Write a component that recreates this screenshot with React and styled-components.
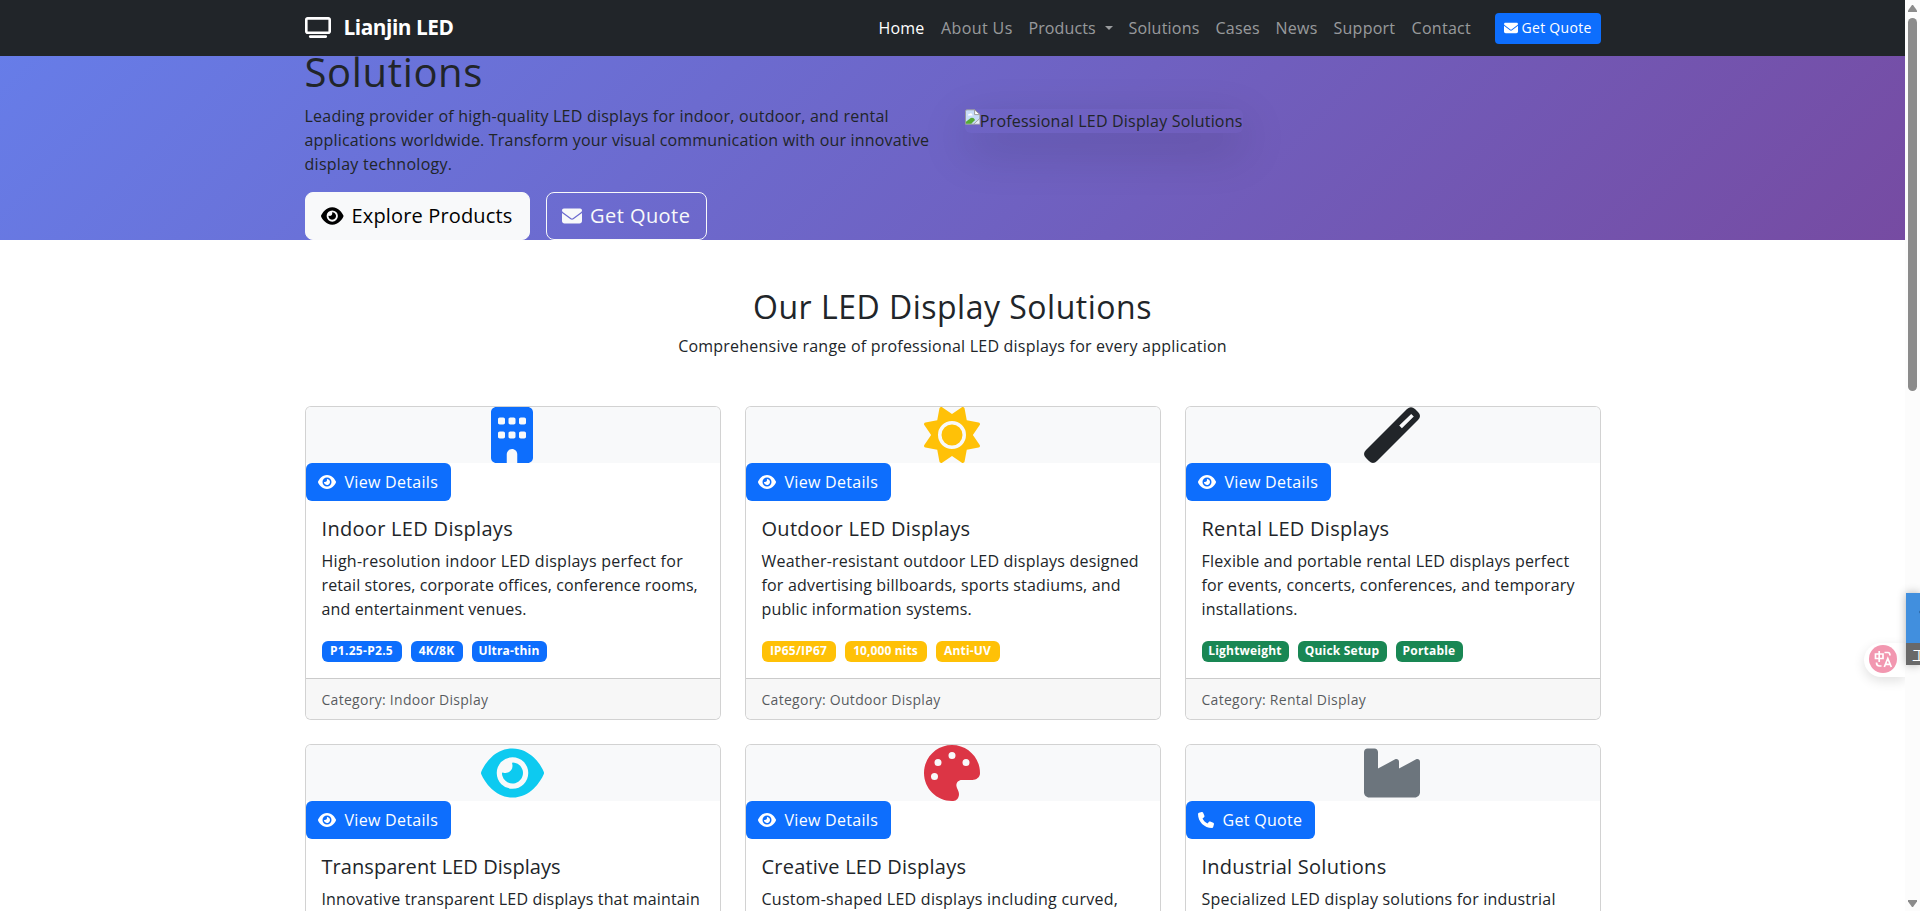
import React from "react";
import styled, { createGlobalStyle } from "styled-components";
import { FaTv, FaEye, FaEnvelope, FaBuilding, FaSun, FaPalette, FaPhone } from "react-icons/fa6";

const Global = createGlobalStyle`
  *, *::before, *::after { box-sizing: border-box; }
  html, body { margin: 0; overflow: hidden; }
  body {
    font-family: "Open Sans", "Noto Sans", sans-serif;
    font-size: 16px;
    line-height: 24px;
    color: #212529;
    background: #fff;
  }
  h1, h2, h5, p { margin: 0; font-weight: 400; }
`;

const Window = styled.div`
  display: flex;
  height: 911px;
  overflow: hidden;
`;

const Page = styled.div`
  position: relative;
  width: 1905px;
  height: 911px;
  overflow: hidden;
`;

const Container = styled.div`
  width: 1296px;
  margin: 0 auto;
`;

const Navbar = styled.nav`
  position: absolute;
  inset: 0 0 auto 0;
  z-index: 2;
  height: 56px;
  background: #212529;
`;

const NavRow = styled(Container)`
  display: flex;
  align-items: center;
  justify-content: space-between;
  height: 56px;
`;

const Brand = styled.div`
  display: flex;
  align-items: center;
  gap: 13px;
  padding-bottom: 2px;
  color: #fff;
  font-size: 20.8px;
  font-weight: 700;
  letter-spacing: -0.45px;
  svg { width: 26px; height: 21px; }
`;

const NavLinks = styled.div`
  display: flex;
  align-items: center;
  gap: 16px;
`;

const NavLink = styled.a`
  display: flex;
  align-items: center;
  white-space: nowrap;
  width: ${(p) => p.$w}px;
  padding-bottom: 1px;
  letter-spacing: ${(p) => p.$ls || 0}px;
  color: ${(p) => (p.$active ? "#fff" : "rgba(255,255,255,.55)")};
`;

const Caret = styled.span`
  margin-left: 9px;
  border-top: 4.8px solid;
  border-left: 4.8px solid transparent;
  border-right: 4.8px solid transparent;
`;

const QuoteButton = styled.a`
  display: flex;
  align-items: center;
  gap: 4px;
  width: 106px;
  height: 31px;
  margin-left: 7px;
  padding: 0 0 1px 9px;
  border-radius: 4px;
  background: #0d6efd;
  color: #fff;
  font-size: 14px;
  letter-spacing: 0.3px;
  white-space: nowrap;
  svg { width: 14px; height: 14px; }
`;

const Hero = styled.section`
  height: 240px;
  padding-top: 48px;
  background: linear-gradient(135deg, #667eea 0%, #764ba2 100%);
`;

const HeroRow = styled(Container)`
  display: flex;
`;

const HeroText = styled.div`
  width: 660px;
`;

const HeroTitle = styled.h1`
  height: 48px;
  margin-bottom: 8px;
  font-size: 40px;
  line-height: 47px;
  letter-spacing: 0.65px;
`;

const Line = styled.span`
  display: block;
  white-space: nowrap;
  letter-spacing: ${(p) => p.$ls || 0}px;
`;

const HeroButtons = styled.div`
  display: flex;
  gap: 16px;
  margin-top: 16px;
`;

const HeroButton = styled.a`
  display: flex;
  align-items: center;
  gap: 8px;
  width: ${(p) => p.$w}px;
  height: 48px;
  padding-left: 15.500px;
  padding-bottom: 1px;
  border: 1px solid #f8f9fa;
  border-radius: 8px;
  background: ${(p) => (p.$outline ? "transparent" : "#f8f9fa")};
  color: ${(p) => (p.$outline ? "#f8f9fa" : "#000")};
  font-size: 20px;
  letter-spacing: ${(p) => p.$ls}px;
  white-space: nowrap;
  svg { width: ${(p) => p.$icon}px; height: 20px; }
`;

const HeroImage = styled.div`
  display: flex;
  align-self: flex-start;
  width: 278px;
  height: 24px;
  margin-top: 61px;
  border-radius: 6px;
  box-shadow: 0 16px 48px rgba(0, 0, 0, 0.175);
  letter-spacing: 0.19px;
  white-space: nowrap;
`;

const Section = styled.section`
  padding-top: 48px;
`;

const SectionTitle = styled.h2`
  height: 38px;
  margin-bottom: 8px;
  font-size: 32px;
  line-height: 37px;
  letter-spacing: 0.5px;
  text-align: center;
`;

const SectionLead = styled.p`
  margin-bottom: 48px;
  letter-spacing: 0.22px;
  text-align: center;
`;

const CardGrid = styled(Container)`
  display: grid;
  grid-template-columns: repeat(3, 416px);
  gap: 24px;
`;

const Card = styled.article`
  display: flex;
  flex-direction: column;
  height: 314px;
  border: 1px solid rgba(0, 0, 0, 0.175);
  border-radius: 6px;
  background: #fff;
  overflow: hidden;
`;

const CardTop = styled.div`
  display: flex;
  align-items: center;
  justify-content: center;
  height: 56px;
  padding-right: 1px;
  background: #f8f9fa;
  color: ${(p) => p.$color};
  svg { flex: none; width: ${(p) => p.$icon || 56}px; height: 56px; }
`;

const CardButton = styled.a`
  display: flex;
  align-items: center;
  gap: 8.500px;
  width: ${(p) => p.$w}px;
  height: 38px;
  padding: 0 0 1px 12.500px;
  border-radius: 6px;
  background: #0d6efd;
  color: #fff;
  letter-spacing: 0.3px;
  white-space: nowrap;
  svg { width: ${(p) => p.$icon}px; height: 16px; }
`;

const CardBody = styled.div`
  flex: 1;
  padding: 16px;
`;

const CardTitle = styled.h5`
  height: 24px;
  margin-bottom: 8px;
  font-size: 20px;
  line-height: 23px;
  letter-spacing: ${(p) => p.$ls}px;
  white-space: nowrap;
`;

const Badges = styled.div`
  display: flex;
  gap: 9px;
  margin-top: 20px;
`;

const Badge = styled.span`
  width: ${(p) => p.$w}px;
  height: 21px;
  border-radius: 6px;
  background: ${(p) => p.$color};
  color: #fff;
  font-size: 12px;
  font-weight: 700;
  line-height: 19px;
  letter-spacing: ${(p) => p.$ls || 0}px;
  text-align: center;
  white-space: nowrap;
`;

const CardFooter = styled.div`
  height: 41px;
  padding: 9px 16px 7px;
  border-top: 1px solid rgba(0, 0, 0, 0.175);
  background: #f7f7f7;
  color: rgba(33, 37, 41, 0.75);
  font-size: 14px;
  letter-spacing: 0.28px;
`;

const Scrollbar = styled.div`
  display: flex;
  flex-direction: column;
  align-items: center;
  justify-content: space-between;
  width: 15px;
  height: 911px;
  padding: 5px 0 4px;
  background: #fcfcfc;
`;

const Thumb = styled.div`
  width: 9px;
  height: 373px;
  margin: 6px 0 auto;
  border-radius: 5px;
  background: #8b8b8b;
`;

const TranslateTab = styled.div`
  position: absolute;
  top: 643px;
  right: 0;
  width: 41px;
  height: 34px;
  padding: 2px 0 0 5px;
  border-radius: 17px 0 0 17px;
  background: #fff;
  box-shadow: 0 4px 12px rgba(0, 0, 0, 0.12);
`;

const SideWidget = styled.div`
  position: absolute;
  z-index: 3;
  top: 593px;
  left: 1906px;
  width: 14px;
  height: 72px;
  background: radial-gradient(circle at 16px 19px, #1f4a78 2px, #418fde 3px);
  box-shadow: 0 0 10px rgba(0, 0, 0, 0.3);
`;

const SideLabel = styled.div`
  width: 14px;
  height: 22px;
  margin-top: 50px;
  padding-left: 6px;
  overflow: hidden;
  background: #696969;
  color: #fff;
  font: 14px/22px "Noto Sans CJK SC", sans-serif;
`;

const BrokenImage = () => (
  <svg width="16" height="16" viewBox="0 0 16 16">
    <path d="M.5 2Q.5.5 2 .5H10L15.500 5.500V10L9 15.500H.5Z" fill="#c8dcf8" stroke="#9a9a9a" />
    <path d="M10 .5V5.500H15.500Z" fill="#fff" stroke="#9a9a9a" />
    <path d="M3 6.500Q3 4.500 5 4.500Q7 3 8 6.500Z" fill="#fff" />
    <path d="M1 15V13L6 9Q9 8 10.500 11L6.500 15Z" fill="#56aa35" />
    <path d="M9 15.500L15.500 9.500V15.500Z" fill="#e8eef8" stroke="#9a9a9a" strokeWidth=".7" />
  </svg>
);

const Wand = () => (
  <svg viewBox="0 0 56 56" fill="currentColor">
    <path
      fillRule="evenodd"
      d="M43 2.100Q47 -1.800 51 2.100L54 5.100Q58 9.100 54 13.100L13 54Q9 58 5 54L2 51Q-2 47 2 43ZM47.200 6.900L35.200 18.600L37.900 21.200L49.800 9.500Z"
    />
  </svg>
);

const Factory = () => (
  <svg viewBox="0 0 512 512" fill="currentColor">
    <path d="M32 32C14.300 32 0 46.300 0 64V432c0 26.500 21.500 48 48 48H464c26.500 0 48-21.500 48-48V152.200c0-18.200-19.400-29.700-35.400-21.100L320 215.400V152.200c0-18.200-19.400-29.700-35.400-21.100L128 215.400V64c0-17.700-14.300-32-32-32H32z" />
  </svg>
);

const TranslateIcon = () => (
  <svg width="29" height="29" viewBox="0 0 29 29" fill="none" stroke="#fff" strokeWidth="1.7">
    <circle cx="14" cy="14" r="14" fill="#f297b0" stroke="none" />
    <path d="M6.500 9H14V13.500H6.500ZM10.200 6V17M15.500 7.500H19Q21 7.500 21 10.500M7.500 17.500Q7.500 21 10.500 21H12.500M15.300 22L18.800 13.500L22.300 22M16.500 19.300H21.200" />
  </svg>
);

const Arrow = ({ down }) => (
  <svg width="9" height="7" viewBox="0 0 9 7">
    <path d={down ? "M0 0H9V1.500L5 7H4L0 1.500Z" : "M0 7H9V5.500L5 0H4L0 5.500Z"} fill="#8b8b8b" />
  </svg>
);

const links = [
  { t: "Home", w: 46.5, ls: 0.2, active: true },
  { t: "About Us", w: 71.5, ls: 0.4 },
  { t: "Products", w: 84, ls: 0.1, caret: true },
  { t: "Solutions", w: 71, ls: 0.22 },
  { t: "Cases", w: 44, ls: 0.25 },
  { t: "News", w: 42, ls: 0.25 },
  { t: "Support", w: 62, ls: 0.25 },
  { t: "Contact", w: 60, ls: 0.3 },
];

const cards = [
  {
    icon: <FaBuilding />, iconWidth: 42, color: "#0d6efd", title: "Indoor LED Displays", ls: 0.3,
    lines: [["High-resolution indoor LED displays perfect for", 0.27], ["retail stores, corporate offices, conference rooms,", 0.1], ["and entertainment venues.", 0.12]],
    badge: "#0d6efd", badges: [["P1.25-P2.5", 80, 0.3], ["4K/8K", 52, 0.2], ["Ultra-thin", 75, 0.2]], category: "Indoor Display",
  },
  {
    icon: <FaSun />, color: "#ffc107", title: "Outdoor LED Displays", ls: 0.3,
    lines: [["Weather-resistant outdoor LED displays designed", 0.21], ["for advertising billboards, sports stadiums, and", 0.18], ["public information systems.", 0.15]],
    badge: "#ffc107", badges: [["IP65/IP67", 74, 0.2], ["10,000 nits", 82, 0.1], ["Anti-UV", 64, 0.2]], category: "Outdoor Display",
  },
  {
    icon: <Wand />, color: "#212529", title: "Rental LED Displays", ls: 0.27,
    lines: [["Flexible and portable rental LED displays perfect", 0.18], ["for events, concerts, conferences, and temporary", 0.15], ["installations.", 0.15]],
    badge: "#198754", badges: [["Lightweight", 87, 0.2], ["Quick Setup", 89, 0.2], ["Portable", 67, 0.2]], category: "Rental Display",
  },
  { icon: <FaEye />, iconWidth: 63, color: "#0dcaf0", title: "Transparent LED Displays", ls: 0.06, lines: [["Innovative transparent LED displays that maintain", 0.15]] },
  { icon: <FaPalette />, color: "#dc3545", title: "Creative LED Displays", ls: 0.22, lines: [["Custom-shaped LED displays including curved,", 0.25]] },
  { icon: <Factory />, color: "#6c757d", title: "Industrial Solutions", ls: 0.25, lines: [["Specialized LED display solutions for industrial", 0.21]], quote: true },
];

export default function App() {
  return (
    <>
      <Global />
      <Window>
        <Page>
          <Navbar>
            <NavRow>
              <Brand><FaTv />Lianjin LED</Brand>
              <NavLinks>
                {links.map((l) => (
                  <NavLink key={l.t} $w={l.w} $ls={l.ls} $active={l.active}>{l.t}{l.caret && <Caret />}</NavLink>
                ))}
                <QuoteButton><FaEnvelope />Get Quote</QuoteButton>
              </NavLinks>
            </NavRow>
          </Navbar>
          <Hero>
            <HeroRow>
              <HeroText>
                <HeroTitle>Solutions</HeroTitle>
                <p>
                  <Line $ls={0.22}>Leading provider of high-quality LED displays for indoor, outdoor, and rental</Line>
                  <Line $ls={0.18}>applications worldwide. Transform your visual communication with our innovative</Line>
                  <Line $ls={0.28}>display technology.</Line>
                </p>
                <HeroButtons>
                  <HeroButton $w={225} $icon={22.5} $ls={0.15}><FaEye />Explore Products</HeroButton>
                  <HeroButton $w={161} $icon={20} $ls={0.45} $outline><FaEnvelope />Get Quote</HeroButton>
                </HeroButtons>
              </HeroText>
              <HeroImage><BrokenImage />Professional LED Display Solutions</HeroImage>
            </HeroRow>
          </Hero>
          <Section>
            <SectionTitle>Our LED Display Solutions</SectionTitle>
            <SectionLead>Comprehensive range of professional LED displays for every application</SectionLead>
            <CardGrid>
              {cards.map((c) => (
                <Card key={c.title}>
                  <CardTop $color={c.color} $icon={c.iconWidth}>{c.icon}</CardTop>
                  <CardButton $w={c.quote ? 129 : 145} $icon={c.quote ? 16 : 18}>
                    {c.quote ? <FaPhone /> : <FaEye />}
                    {c.quote ? "Get Quote" : "View Details"}
                  </CardButton>
                  <CardBody>
                    <CardTitle $ls={c.ls}>{c.title}</CardTitle>
                    <p>{c.lines.map(([t, ls]) => <Line key={t} $ls={ls}>{t}</Line>)}</p>
                    {c.badges && (
                      <Badges>
                        {c.badges.map(([t, w, ls]) => <Badge key={t} $w={w} $ls={ls} $color={c.badge}>{t}</Badge>)}
                      </Badges>
                    )}
                  </CardBody>
                  {c.category && <CardFooter>Category: {c.category}</CardFooter>}
                </Card>
              ))}
            </CardGrid>
          </Section>
          <TranslateTab><TranslateIcon /></TranslateTab>
        </Page>
        <Scrollbar>
          <Arrow />
          <Thumb />
          <Arrow down />
        </Scrollbar>
        <SideWidget><SideLabel>工</SideLabel></SideWidget>
      </Window>
    </>
  );
}
